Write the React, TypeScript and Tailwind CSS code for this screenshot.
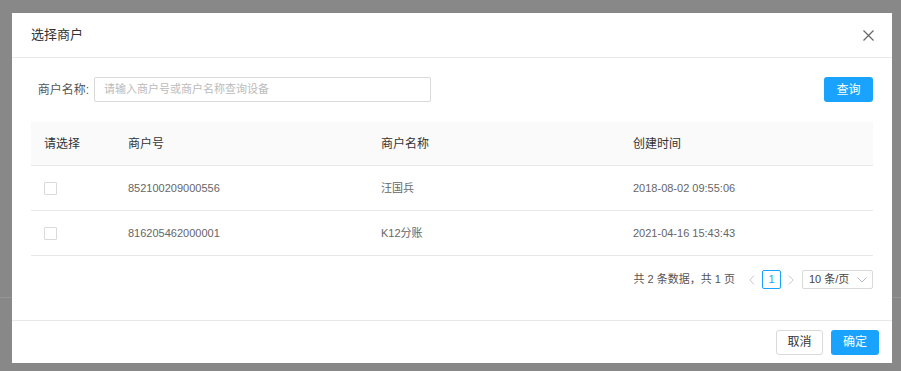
import React from "react";

const rows = [
  { no: "852100209000556", name: "汪国兵", time: "2018-08-02 09:55:06" },
  { no: "816205462000001", name: "K12分账", time: "2021-04-16 15:43:43" },
];

const font = {
  fontFamily: '"Liberation Sans", Arial, "Noto Sans CJK SC", sans-serif',
};

export default function App() {
  return (
    <div className="relative w-[901px] h-[371px] overflow-hidden bg-[#888888]" style={font}>
      {/* page behind the overlay */}
      <div className="h-[298px] border-b border-[#959595]" />

      {/* Modal */}
      <div className="absolute left-[12px] top-[13px] w-[880px] h-[350px] bg-white flex flex-col">
        {/* header */}
        <div className="h-[45px] shrink-0 flex items-center justify-between pl-[19px] pr-[18px] border-b border-[#e8e8e8]">
          <span className="text-[13px] text-[#333]">选择商户</span>
          <svg width="11" height="11" viewBox="0 0 11 11" className="text-[#666]">
            <path d="M0.5 0.5 L10.5 10.5 M10.5 0.5 L0.5 10.5" stroke="currentColor" strokeWidth="1.2" />
          </svg>
        </div>

        {/* body */}
        <div className="flex-1 px-[19px] pt-[19px]">
          {/* search */}
          <div className="flex items-center h-[25px]">
            <label className="w-[59px] text-right text-[12px] text-[#555] pr-[1px]">商户名称:</label>
            <div className="ml-[4px] w-[337px] h-[25px] border border-[#d9d9d9] rounded-[2px] flex items-center px-[9px] text-[11px] text-[#bbbbbb]">
              请输入商户号或商户名称查询设备
            </div>
            <div className="flex-1" />
            <button className="w-[49px] h-[25px] rounded-[3px] bg-[#19a3ff] text-white text-[12px]">查询</button>
          </div>

          {/* table */}
          <div className="mt-[20px]">
            <div className="grid grid-cols-[84px_253px_252px_1fr] h-[44px] items-center bg-[#fafafa] border-b border-[#e8e8e8] text-[12px] text-[#333]">
              <div className="pl-[13px]">请选择</div>
              <div className="pl-[13px]">商户号</div>
              <div className="pl-[13px]">商户名称</div>
              <div className="pl-[13px]">创建时间</div>
            </div>
            {rows.map((r) => (
              <div
                key={r.no}
                className="grid grid-cols-[84px_253px_252px_1fr] h-[45px] items-center border-b border-[#e8e8e8] text-[11px] text-[#666]"
              >
                <div className="pl-[13px]">
                  <div className="w-[13px] h-[13px] border border-[#d9d9d9] rounded-[1px] bg-white" />
                </div>
                <div className="pl-[13px]">{r.no}</div>
                <div className="pl-[13px]">{r.name}</div>
                <div className="pl-[13px]">{r.time}</div>
              </div>
            ))}
          </div>

          {/* pagination */}
          <div className="mt-[14px] flex items-center justify-end h-[19px] text-[11px] text-[#555]">
            <span>共 2 条数据，共 1 页</span>
            <svg width="6" height="10" viewBox="0 0 6 10" className="ml-[14px] text-[#c8c8c8]">
              <path d="M5 0.5 L1 5 L5 9.5" fill="none" stroke="currentColor" strokeWidth="1" />
            </svg>
            <div className="ml-[7px] w-[19px] h-[19px] border border-[#19a3ff] rounded-[2px] flex items-center justify-center text-[#19a3ff]">
              1
            </div>
            <svg width="6" height="10" viewBox="0 0 6 10" className="ml-[7px] text-[#c8c8c8]">
              <path d="M1 0.5 L5 5 L1 9.5" fill="none" stroke="currentColor" strokeWidth="1" />
            </svg>
            <div className="ml-[8px] w-[71px] h-[19px] border border-[#d9d9d9] rounded-[2px] flex items-center justify-between pl-[6px] pr-[5px] text-[#444]">
              <span>10 条/页</span>
              <svg width="10" height="6" viewBox="0 0 10 6" className="text-[#bbb]">
                <path d="M0.5 0.5 L5 5 L9.5 0.5" fill="none" stroke="currentColor" strokeWidth="1" />
              </svg>
            </div>
          </div>
        </div>

        {/* footer */}
        <div className="h-[43px] shrink-0 border-t border-[#e8e8e8] flex items-center justify-end gap-[8px] pr-[13px]">
          <button className="w-[47px] h-[25px] border border-[#d9d9d9] rounded-[3px] bg-white text-[12px] text-[#333]">取消</button>
          <button className="w-[48px] h-[25px] rounded-[3px] bg-[#19a3ff] text-white text-[12px]">确定</button>
        </div>
      </div>
    </div>
  );
}
